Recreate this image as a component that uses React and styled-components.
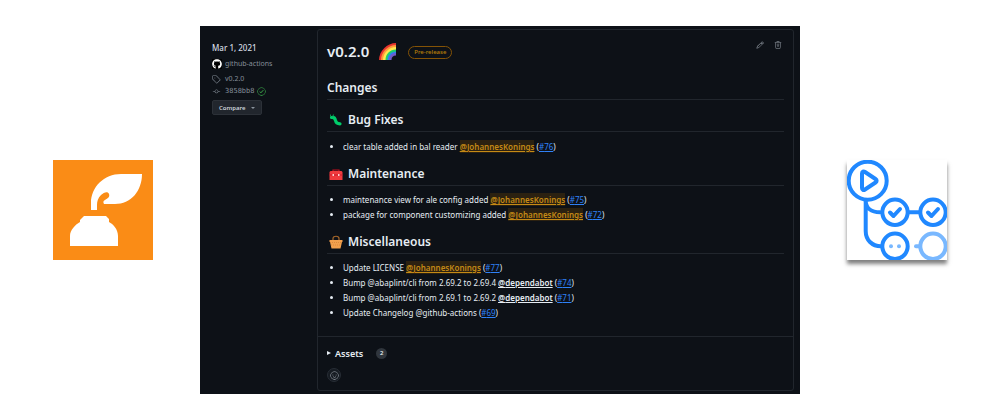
import React from "react";
import styled, { createGlobalStyle } from "styled-components";
import { FaGithub } from "react-icons/fa";
import {
  GoTag,
  GoGitCommit,
  GoCheckCircle,
  GoPencil,
  GoTrash,
  GoSmiley,
} from "react-icons/go";

const Global = createGlobalStyle`
  * { box-sizing: border-box; }
  body {
    margin: 0;
    background: #fff;
    font-family: "Noto Sans", "Open Sans", sans-serif;
  }
  button { font-family: inherit; }
`;

const Page = styled.div`
  display: flex;
  align-items: center;
  justify-content: space-between;
  min-height: 100vh;
  padding: 0 53px;
`;

const Logo = styled.svg`
  display: block;
  flex: none;
  width: 100px;
  height: 100px;
  background: ${(p) => p.$bg};
  box-shadow: ${(p) => (p.$raised ? "0 4px 4px rgba(0, 0, 0, 0.5)" : "none")};
`;

const Panel = styled.main`
  display: flex;
  width: 60vw;
  padding: 3px 6px 3px 12px;
  background: #0d1117;
  color: #e6edf3;
`;

const Sidebar = styled.aside`
  flex: none;
  width: 105px;
  padding-top: 12px;
  color: #868f99;
  font-size: 7px;
`;

const DateLine = styled.div`
  color: #d5dce3;
  font-size: 8px;
  font-weight: 500;
  line-height: 14px;
  margin-bottom: 3px;
`;

const MetaLink = styled.a`
  display: flex;
  align-items: center;
  gap: 4px;
  color: inherit;
  text-decoration: none;
  line-height: 12px;
  font-family: ${(p) => (p.$mono ? '"DejaVu Sans Mono", monospace' : "inherit")};
`;

const Author = styled(MetaLink)`
  gap: 3px;
  margin-bottom: 3px;
  svg {
    color: #fff;
    background: #000;
  }
`;

const CommitRow = styled.div`
  display: flex;
  align-items: center;
  gap: 2px;

  > svg {
    color: #3fb950;
    stroke: currentColor;
  }
`;

const Compare = styled.button`
  display: flex;
  align-items: center;
  justify-content: space-between;
  width: 50px;
  height: 15px;
  margin-top: 3px;
  padding: 0 6px;
  border: 1px solid #2c3138;
  border-radius: 2px;
  background: #21262d;
  color: #c9d1d9;
  font-size: 6px;
  font-weight: 600;
`;

const Caret = styled.span`
  border: 2px solid transparent;
  border-top-color: #8b949e;
  border-bottom: 0;
`;

const Card = styled.article`
  flex: 1;
  border: 1px solid #21262d;
  border-radius: 3px;
`;

const Body = styled.div`
  padding: 0 9px 16px;
`;

const Header = styled.header`
  display: flex;
  align-items: center;
  height: 42px;
`;

const Title = styled.h1`
  display: flex;
  align-items: center;
  gap: 10px;
  margin: 0;
  font-size: 15px;
  font-weight: 600;
`;

const Badge = styled.span`
  margin: 3px 0 0 12px;
  padding: 0 5px;
  border: 1px solid #845306;
  border-radius: 7px;
  color: #bb8009;
  font-size: 6px;
  font-weight: 500;
  line-height: 11px;
`;

const Tools = styled.div`
  display: flex;
  gap: 10px;
  margin: 0 2px 12px auto;
`;

const IconButton = styled.button`
  display: flex;
  padding: 0;
  border: 0;
  background: none;
  color: #9ba3ac;
`;

const Heading = styled.h2`
  display: flex;
  align-items: center;
  gap: 5px;
  margin: 0;
  padding: ${(p) => (p.$sub ? "12px" : "8px")} 0 3px;
  border-bottom: 1px solid #21262d;
  font-size: 12px;
  font-weight: 600;
  line-height: 16px;
`;

const List = styled.ul`
  display: grid;
  gap: 1px;
  margin: 0;
  padding: 8px 0 0 16px;
  font-size: 8px;
  line-height: 14px;

  section + section > & {
    padding-top: 7px;
  }
`;

const Mention = styled.a`
  padding: 1px 0;
  color: ${(p) => (p.$own ? "#c58a15" : "#e6edf3")};
  background: ${(p) => (p.$own ? "#2b2111" : "none")};
  font-weight: 600;
  text-underline-offset: 1px;
`;

const Issue = styled.a`
  color: #2f81f7;
  text-underline-offset: 1px;
`;

const Footer = styled.footer`
  padding: 8px 9px;
  border-top: 1px solid #21262d;
`;

const Summary = styled.summary`
  display: flex;
  align-items: center;
  height: 16px;
  list-style: none;
  font-size: 9px;
  font-weight: 600;
  &::before {
    content: "";
    margin-right: 4px;
    border: 2px solid transparent;
    border-left: 4px solid #e6edf3;
    border-right: 0;
  }
`;

const Count = styled.span`
  min-width: 11px;
  margin-left: 13px;
  border-radius: 6px;
  background: #30363d;
  font-size: 6px;
  line-height: 11px;
  text-align: center;
`;

const ReactionButton = styled.button`
  display: flex;
  align-items: center;
  justify-content: center;
  width: 14px;
  height: 14px;
  margin-top: 7px;
  padding: 0;
  border: 1px solid #272d35;
  border-radius: 50%;
  background: #161b22;
  color: #a5adb6;
`;

const Quill = () => (
  <Logo viewBox="0 0 100 100" $bg="#fa8c16" role="img" aria-label="abaplint">
    <path fill="#fff" d="M38 50V43C38 27 51 14 68 14H89C89 31 78 44 62 44H51C50 42 50 41 52 40C55 38 57 37 56 34C55 31 51 32 48 35C45 38 44 41 44 45V50Z" />
    <path fill="#fff" d="M31 56H53L56 59V62C60 64 65 69 65 76V86H17V76C17 70 22 65 27 62V60Z" />
  </Logo>
);

const ActionsLogo = () => (
  <Logo viewBox="0 0 100 100" $bg="#fff" $raised role="img" aria-label="GitHub Actions">
    <g fill="none" stroke="#2088ff" strokeWidth="4" strokeLinecap="round" strokeLinejoin="round">
      <circle cx="20.7" cy="20.7" r="19" />
      <path d="M15 13.5C15 11.5 16.5 11 18 12L28.5 19C30 20 30 21.5 28.5 22.5L18 29.5C16.5 30.5 15 30 15 28Z" />
      <path d="M18.7 41V71C18.7 80 25 86.3 34 86.3M18.7 41C19 48 24 52.3 33 52.3M62 52.3H72" />
      <circle cx="48" cy="52.3" r="12.7" />
      <circle cx="86" cy="52.3" r="12.7" />
      <circle cx="48" cy="86.3" r="12.7" />
      <path d="M43 52.5L46.5 56L53 49M81 52.5L84.5 56L91 49" />
    </g>
    <g fill="none" stroke="#79b8ff" strokeWidth="4" strokeLinecap="round">
      <circle cx="86" cy="86.3" r="12.7" />
      <path d="M69 86.3H72" />
    </g>
    <circle cx="44" cy="86.3" r="2" fill="#79b8ff" />
    <circle cx="52" cy="86.3" r="2" fill="#79b8ff" />
  </Logo>
);

const Rainbow = () => (
  <svg width="17" height="17" viewBox="0 0 17 17" aria-hidden="true">
    <path fill="#e8352e" d="M0 17C0 8 8 0 17 0V17Z" />
    <path fill="#ff9a3c" d="M2 17C2 9 9 2 17 2V17Z" />
    <path fill="#ffe94e" d="M4 17C4 10 10 4 17 4V17Z" />
    <path fill="#1fcf68" d="M6.5 17C6.5 11 11 6.5 17 6.5V17Z" />
    <path fill="#2f7ff0" d="M8.5 17C8.5 12 12 8.5 17 8.5V17Z" />
    <path fill="#7359c9" d="M10 17C10 13 13 10 17 10V17Z" />
    <path fill="#0d1117" d="M12.5 17C12.5 14 14 12.5 17 12.5V17Z" />
  </svg>
);

const Emoji = styled.svg`
  width: 14px;
  height: 14px;
  margin-left: 2px;
`;

const Bug = () => (
  <Emoji viewBox="0 0 14 14" aria-hidden="true">
    <path d="M2.5 4.5C5 4 6 5 6.5 7.5C7 10 8 10.8 11 10.8" fill="none" stroke="#00cc6a" strokeWidth="3.2" strokeLinecap="round" />
    <path d="M1.5 4V1.5M4 3.5L4.5 1.5" stroke="#0a8f50" strokeWidth="1" />
  </Emoji>
);

const Toolbox = () => (
  <Emoji viewBox="0 0 14 14" aria-hidden="true">
    <path d="M4 4V3H10V4" fill="none" stroke="#c50f1f" strokeWidth="1.2" />
    <path fill="#f03a3e" d="M1.5 4H12.5L13.5 5V13H.5V5Z" />
    <path stroke="#c91c2c" d="M.5 8H13.5" />
    <path fill="#ffd0d0" d="M3.5 7H5V9H3.5ZM9 7H10.5V9H9Z" />
  </Emoji>
);

const Basket = () => (
  <Emoji viewBox="0 0 14 14" aria-hidden="true">
    <path d="M4 6V3.5C4 .5 10 .5 10 3.5V6" fill="none" stroke="#a5672b" strokeWidth="1.2" />
    <path fill="#f2a04d" d="M.5 5H13.5V7H13L11.5 13.5H2.5L1 7H.5Z" />
    <path stroke="#c97b31" strokeWidth=".6" d="M1 7.5H13M2 10H12" strokeDasharray="1 1" />
  </Emoji>
);

const sections = [
  {
    title: "Bug Fixes",
    icon: <Bug />,
    items: [["clear table added in bal reader", "JohannesKonings", 76]],
  },
  {
    title: "Maintenance",
    icon: <Toolbox />,
    items: [
      ["maintenance view for ale config added", "JohannesKonings", 75],
      ["package for component customizing added", "JohannesKonings", 72],
    ],
  },
  {
    title: "Miscellaneous",
    icon: <Basket />,
    items: [
      ["Update LICENSE", "JohannesKonings", 77],
      ["Bump @abaplint/cli from 2.69.2 to 2.69.4", "dependabot", 74],
      ["Bump @abaplint/cli from 2.69.1 to 2.69.2", "dependabot", 71],
      ["Update Changelog @github-actions", null, 69],
    ],
  },
];

const Section = ({ title, icon, items }) => (
  <section>
    <Heading as="h3" $sub>
      {icon}
      {title}
    </Heading>
    <List>
      {items.map(([text, user, issue]) => (
        <li key={issue}>
          {text}{" "}
          {user && (
            <>
              <Mention href={`#${user}`} $own={user === "JohannesKonings"}>@{user}</Mention>{" "}
            </>
          )}
          (<Issue href={`#${issue}`}>#{issue}</Issue>)
        </li>
      ))}
    </List>
  </section>
);

export default function App() {
  return (
    <>
      <Global />
      <Page>
        <Quill />
        <Panel>
          <Sidebar>
            <DateLine>Mar 1, 2021</DateLine>
            <Author href="#github-actions">
              <FaGithub size={10} />
              github-actions
            </Author>
            <MetaLink href="#tag">
              <GoTag size={9} />
              v0.2.0
            </MetaLink>
            <CommitRow>
              <MetaLink href="#commit" $mono>
                <GoGitCommit size={9} stroke="currentColor" />
                3858bb8
              </MetaLink>
              <GoCheckCircle size={9} />
            </CommitRow>
            <Compare type="button">
              Compare
              <Caret />
            </Compare>
          </Sidebar>
          <Card>
            <Body>
              <Header>
                <Title>
                  v0.2.0
                  <Rainbow />
                </Title>
                <Badge>Pre-release</Badge>
                <Tools>
                  <IconButton type="button" aria-label="Edit"><GoPencil size={8} /></IconButton>
                  <IconButton type="button" aria-label="Delete"><GoTrash size={8} /></IconButton>
                </Tools>
              </Header>
              <Heading>Changes</Heading>
              {sections.map((s) => (
                <Section key={s.title} {...s} />
              ))}
            </Body>
            <Footer>
              <details>
                <Summary>
                  Assets
                  <Count>2</Count>
                </Summary>
              </details>
              <ReactionButton type="button" aria-label="Add reaction">
                <GoSmiley size={9} />
              </ReactionButton>
            </Footer>
          </Card>
        </Panel>
        <ActionsLogo />
      </Page>
    </>
  );
}
